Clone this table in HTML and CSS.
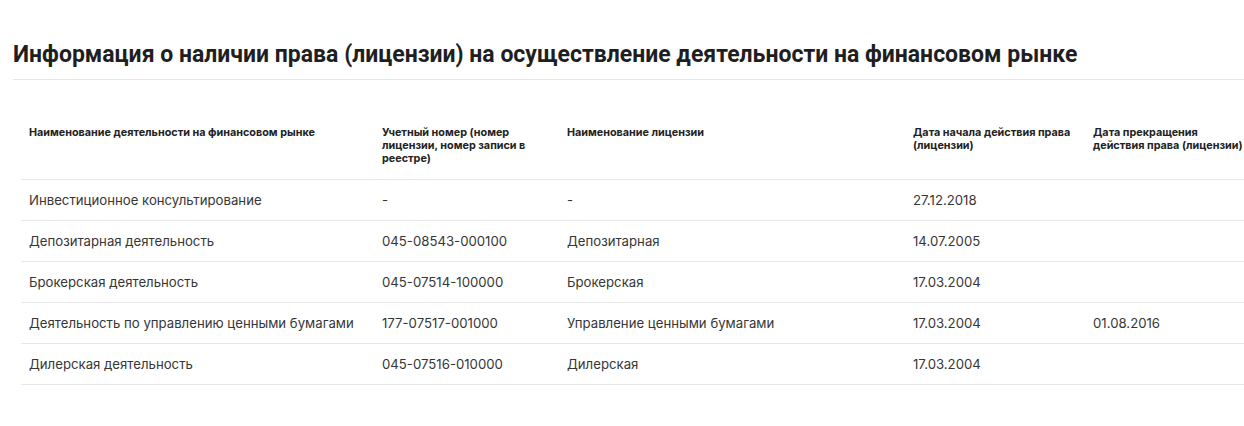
FILE: index.html
```html
<!DOCTYPE html>
<html lang="ru">
<head>
<meta charset="utf-8">
<title>Лицензии</title>
<link rel="stylesheet" href="styles.css">
</head>
<body>
<section class="block">
  <h2 class="title">Информация о наличии права (лицензии) на осуществление деятельности на финансовом рынке</h2>
  <div class="table-wrap">
    <table class="lic">
      <colgroup>
        <col class="c1"><col class="c2"><col class="c3"><col class="c4"><col class="c5">
      </colgroup>
      <thead>
        <tr>
          <th>Наименование деятельности на финансовом рынке</th>
          <th>Учетный номер (номер лицензии, номер записи в реестре)</th>
          <th>Наименование лицензии</th>
          <th>Дата начала действия права (лицензии)</th>
          <th>Дата прекращения действия права (лицензии)</th>
        </tr>
      </thead>
      <tbody>
        <tr><td>Инвестиционное консультирование</td><td>-</td><td>-</td><td>27.12.2018</td><td></td></tr>
        <tr><td>Депозитарная деятельность</td><td>045-08543-000100</td><td>Депозитарная</td><td>14.07.2005</td><td></td></tr>
        <tr><td>Брокерская деятельность</td><td>045-07514-100000</td><td>Брокерская</td><td>17.03.2004</td><td></td></tr>
        <tr><td>Деятельность по управлению ценными бумагами</td><td>177-07517-001000</td><td>Управление ценными бумагами</td><td>17.03.2004</td><td>01.08.2016</td></tr>
        <tr><td>Дилерская деятельность</td><td>045-07516-010000</td><td>Дилерская</td><td>17.03.2004</td><td></td></tr>
      </tbody>
    </table>
  </div>
</section>
</body>
</html>
```
FILE: styles.css
```css
html, body {
  margin: 0;
  padding: 0;
  background: #fff;
  overflow: hidden;
}
body {
  font-family: "Inter", "Roboto", sans-serif;
  color: #333;
}
.block {
  padding: 40px 0 0 13px;
}
.title {
  margin: 0;
  font-family: "Roboto", sans-serif;
  font-weight: 700;
  font-size: 23px;
  line-height: 30px;
  color: #1f1f22;
  padding-bottom: 9px;
  border-bottom: 1px solid #e6e6e6;
}
.table-wrap {
  padding: 37px 0 0 8px;
}
.lic {
  border-collapse: collapse;
  table-layout: fixed;
  width: 1231px;
}
.c1 { width: 353px; }
.c2 { width: 185px; }
.c3 { width: 346px; }
.c4 { width: 180px; }
.c5 { width: 167px; }
.lic th {
  text-align: left;
  vertical-align: top;
  font-size: 10.8px;
  font-weight: 700;
  line-height: 13px;
  color: #222;
  padding: 9px 8px 14px;
  height: 39px;
  border-bottom: 1px solid #e8e8e8;
}
.lic td {
  font-size: 13.2px;
  line-height: 16px;
  color: #363636;
  padding: 12px 8px;
  border-bottom: 1px solid #e8e8e8;
  height: 16px;
}
```
